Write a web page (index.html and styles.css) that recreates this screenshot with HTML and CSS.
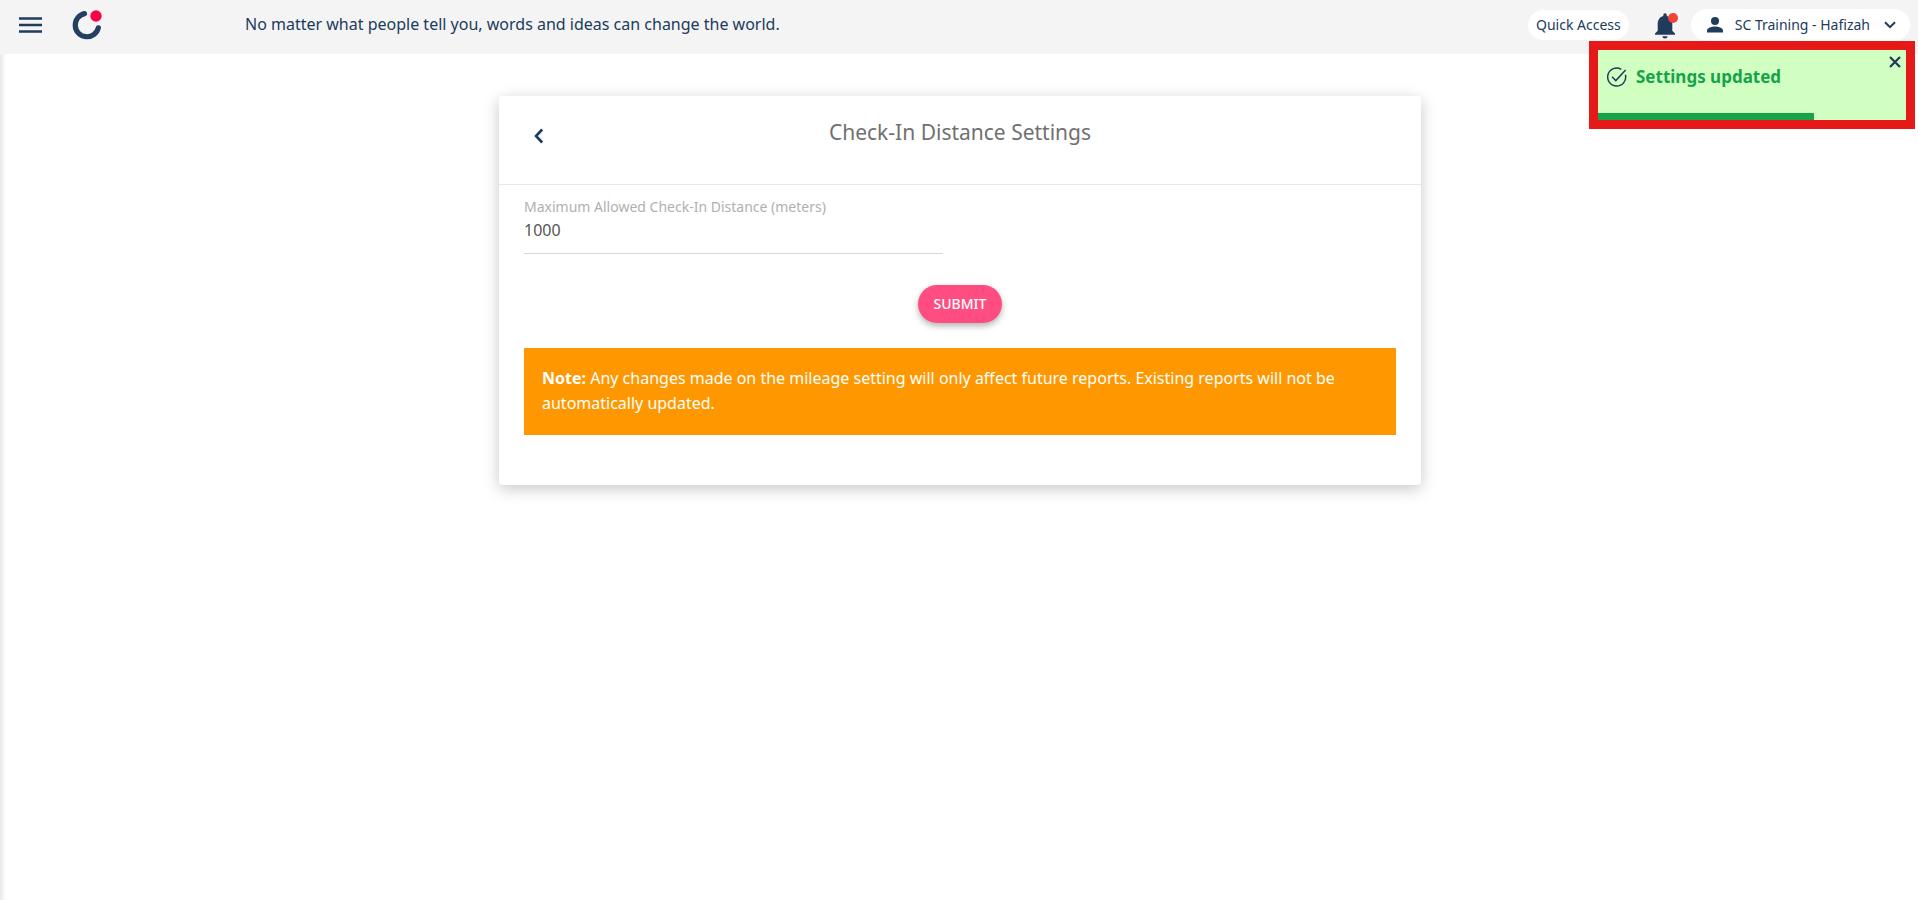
FILE: index.html
```html
<!DOCTYPE html>
<html lang="en">
<head>
<meta charset="utf-8">
<meta name="viewport" content="width=device-width, initial-scale=1">
<title>Check-In Distance Settings</title>
<link rel="stylesheet" href="styles.css">
</head>
<body>
<header class="topbar">
  <button class="icon-button menu-button" type="button" aria-label="Menu">
    <svg width="24" height="16" viewBox="0 0 24 16"><path d="M0 1.5h23M0 8h23M0 14.5h23" stroke="currentColor" stroke-width="2.4"/></svg>
  </button>
  <a class="logo" href="#" aria-label="Home">
    <svg width="30" height="30" viewBox="0 0 30 30"><path d="M12.5 3.6A11.7 11.7 0 1 0 26.3 17.8" fill="none" stroke="#243f60" stroke-width="5.2" stroke-linecap="round"/><circle cx="24" cy="6" r="5.7" fill="#ff0049"/></svg>
  </a>
  <p class="tagline">No matter what people tell you, words and ideas can change the world.</p>
  <div class="actions">
    <button class="pill quick-access" type="button">Quick Access</button>
    <button class="icon-button bell" type="button" aria-label="Notifications">
      <svg width="24" height="26" viewBox="0 0 24 26"><path d="M0 21.7v-1.2l2.7-2.7V11c0-4.1 2.1-7.1 5.6-8V2.1a1.75 1.75 0 0 1 3.5 0V3c3.5.9 5.5 4 5.5 8v6.800l2.700 2.700v1.200zM7.400 23.200h5.200a2.600 2.200 0 0 1-5.200 0z" fill="#203b5c"/><circle cx="18" cy="5" r="5" fill="#f44336"/></svg>
    </button>
    <button class="pill account" type="button">
      <svg width="16" height="16" viewBox="0 0 16 16"><circle cx="8" cy="4" r="4" fill="#203b5c"/><path d="M0 15.500v-2c0-2.700 5.300-4 8-4s8 1.300 8 4v2z" fill="#203b5c"/></svg>
      <span class="account-name">SC Training - Hafizah</span>
      <svg width="12" height="8" viewBox="0 0 12 8"><path d="M1 1.200l5 5 5-5" fill="none" stroke="#203b5c" stroke-width="2"/></svg>
    </button>
  </div>
</header>

<main class="page">
  <section class="card">
    <div class="card-header">
      <button class="icon-button back" type="button" aria-label="Back">
        <svg width="10" height="16" viewBox="0 0 10 16"><path d="M8.200 1.500L2 8l6.200 6.500" fill="none" stroke="currentColor" stroke-width="2.600"/></svg>
      </button>
      <h1 class="title">Check-In Distance Settings</h1>
    </div>
    <form class="card-body">
      <div class="field">
        <label class="label" for="distance">Maximum Allowed Check-In Distance (meters)</label>
        <input class="input" id="distance" type="text" inputmode="numeric" value="1000">
      </div>
      <button class="submit" type="button">SUBMIT</button>
      <p class="note"><strong>Note:</strong> Any changes made on the mileage setting will only affect future reports. Existing reports will not be automatically updated.</p>
    </form>
  </section>
</main>

<div class="toast" role="status">
  <svg class="toast-icon" width="20" height="20" viewBox="0 0 20 20" fill="none" stroke="#203b5c" stroke-width="1.500"><path d="M18.400 7.800A9 9 0 1 1 14.300 2.300"/><path d="M5 9.800l3.800 3.800L18.600 3"/></svg>
  <p class="toast-text">Settings updated</p>
  <button class="icon-button toast-close" type="button" aria-label="Close">
    <svg width="12" height="12" viewBox="0 0 12 12"><path d="M1 1l10 10M11 1L1 11" stroke="currentColor" stroke-width="2.200"/></svg>
  </button>
  <div class="toast-progress"></div>
</div>
</body>
</html>
```
FILE: styles.css
```css
* { box-sizing: border-box; }

body {
  margin: 0;
  min-height: 100vh;
  display: flex;
  flex-direction: column;
  background: #fff;
  color: #203b5c;
  font-family: "Noto Sans", "Open Sans", sans-serif;
  font-size: 16px;
}

h1, p { margin: 0; }
svg { display: block; flex: none; }
button, input { font: inherit; color: inherit; }

.icon-button {
  padding: 0;
  border: 0;
  background: none;
  cursor: pointer;
}

.topbar {
  display: flex;
  align-items: center;
  min-height: 54px;
  padding: 0 8px 4px 19px;
  background: #f4f4f4;
}

.logo { margin-left: 29px; }

.tagline {
  margin-left: 143px;
  padding-bottom: 2px;
  line-height: 24px;
}

.actions {
  display: flex;
  align-items: center;
  margin-left: auto;
  font-size: 14px;
}

.pill {
  border: 0;
  border-radius: 16px;
  background: #fff;
  white-space: nowrap;
}

.quick-access { height: 30px; padding: 0 8px 2px; }
.bell { margin: 2px 12px 0 26px; }

.account {
  display: flex;
  align-items: center;
  height: 32px;
  padding: 0 14px 0 16px;
}

.account-name { margin: 0 14px 0 12px; padding-bottom: 2px; }

.page {
  flex: 1;
  padding: 42px 24px 42px 26px;
  background: linear-gradient(to right, #e8e8e8, #fff 6px);
}

.card {
  max-width: 922px;
  margin: 0 auto;
  padding-bottom: 50px;
  border-radius: 3px;
  background: #fff;
  box-shadow: 0 4px 16px rgba(0, 0, 0, 0.22);
}

.card-header {
  display: grid;
  grid-template-columns: 30px 1fr 30px;
  padding: 20px 25px 36px;
  border-bottom: 1px solid #e8e8e8;
}

.back {
  justify-self: center;
  align-self: end;
  padding-bottom: 4px;
}

.title {
  color: #707070;
  font-size: 21px;
  font-weight: 400;
  line-height: 32px;
  text-align: center;
}

.card-body {
  display: flex;
  flex-direction: column;
  padding: 12px 25px 0;
}

.field {
  display: flex;
  flex-direction: column;
  width: 48%;
}

.label {
  color: #b0b0b0;
  font-size: 14px;
  line-height: 20px;
  white-space: nowrap;
}

.input {
  width: 100%;
  height: 37px;
  padding: 0 0 10px;
  border: 0;
  border-bottom: 1px solid #d8d8d8;
  background: none;
  color: #555;
}

.submit {
  align-self: center;
  height: 38px;
  margin: 31px 0 25px;
  padding: 0 16px 2px;
  border: 0;
  border-radius: 19px;
  background: #ff4d82;
  box-shadow: 0 3px 6px rgba(0, 0, 0, 0.3);
  color: #fff;
  font-size: 14px;
  font-weight: 500;
}

.note {
  padding: 18px 18px 19px;
  background: #ff9800;
  color: #fff;
  line-height: 25px;
}

.toast {
  position: absolute;
  top: 41px;
  right: 3px;
  display: flex;
  width: 326px;
  height: 88px;
  padding: 15px 5px 0 9px;
  border: 9px solid #e61919;
  background: #d1ffc2;
}

.toast-icon { margin-top: 2px; }

.toast-text {
  flex: 1;
  margin-left: 9px;
  color: #16a34a;
  font-size: 17px;
  font-weight: 700;
  line-height: 24px;
}

.toast-close {
  position: absolute;
  top: 6px;
  right: 5px;
}

.toast-progress {
  position: absolute;
  bottom: 0;
  left: 0;
  width: 70%;
  height: 7px;
  background: #16a34a;
}
```
